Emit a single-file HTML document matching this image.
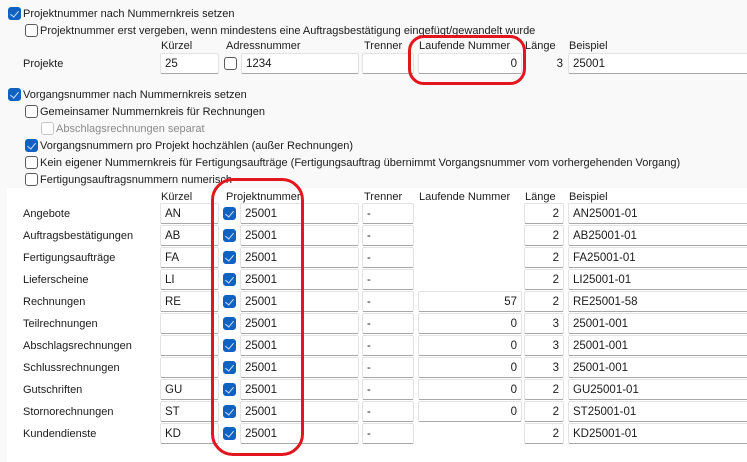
<!DOCTYPE html>
<html><head><meta charset="utf-8"><style>
*{box-sizing:border-box;margin:0;padding:0}
body{width:747px;height:462px;background:#f9f9f9;font-family:"Liberation Sans",sans-serif;font-size:11px;color:#1b1b1b;position:relative;overflow:hidden}
.t{position:absolute;white-space:nowrap;line-height:16px}
.cb{position:absolute;width:13px;height:13px;border:1px solid #5a5a5a;border-radius:3px;background:#fff}
.cb.on{background:#0f62c2;border-color:#0f62c2}
.cb.on::after{content:"";position:absolute;left:3px;top:1px;width:4px;height:7px;border:solid #cfe2fa;border-width:0 1.3px 1.3px 0;transform:rotate(40deg)}
.cb.dis{border-color:#c4c4c4}
.in{position:absolute;height:21px;background:#fff;border:1px solid #e3e3e3;border-bottom-color:#a8a8a8;border-radius:2px;padding:4px 4px 3px;line-height:13px;font-size:11.5px}
.r{text-align:right}
.white{position:absolute;left:7px;top:188px;right:0;bottom:0;background:#fff}
.red{position:absolute;border:3.5px solid #e3151d;border-radius:16px}
</style></head><body>
<div class="cb on" style="left:8px;top:7px"></div><div class="t" style="left:23px;top:6px">Projektnummer nach Nummernkreis setzen</div>
<div class="cb" style="left:25px;top:24px"></div><div class="t" style="left:40px;top:23px">Projektnummer erst vergeben, wenn mindestens eine Auftragsbestätigung eingefügt/gewandelt wurde</div>
<div class="t" style="left:161px;top:38px">Kürzel</div>
<div class="t" style="left:226px;top:38px">Adressnummer</div>
<div class="t" style="left:364px;top:38px">Trenner</div>
<div class="t" style="left:419px;top:38px">Laufende Nummer</div>
<div class="t" style="left:525px;top:38px">Länge</div>
<div class="t" style="left:569px;top:38px">Beispiel</div>
<div class="t" style="left:23px;top:56px">Projekte</div>
<div class="in" style="left:160px;top:53px;width:59px">25</div>
<div class="cb" style="left:224px;top:57px"></div>
<div class="in" style="left:241px;top:53px;width:118px">1234</div>
<div class="in" style="left:362px;top:53px;width:52px"></div>
<div class="in r" style="left:418px;top:53px;width:104px">0</div>
<div class="t r" style="left:525px;top:56px;width:38px;font-size:11.5px">3</div>
<div class="in" style="left:568px;top:53px;width:182px">25001</div>
<div class="red" style="left:408px;top:35px;width:118px;height:50px"></div>

<div class="cb on" style="left:8px;top:88px"></div><div class="t" style="left:23px;top:87px">Vorgangsnummer nach Nummernkreis setzen</div>
<div class="cb" style="left:25px;top:105px"></div><div class="t" style="left:40px;top:104px">Gemeinsamer Nummernkreis für Rechnungen</div>
<div class="cb dis" style="left:41px;top:122px"></div><div class="t" style="left:56px;top:121px;color:#8a8a8a">Abschlagsrechnungen separat</div>
<div class="cb on" style="left:25px;top:139px"></div><div class="t" style="left:40px;top:138px">Vorgangsnummern pro Projekt hochzählen (außer Rechnungen)</div>
<div class="cb" style="left:25px;top:156px"></div><div class="t" style="left:40px;top:155px">Kein eigener Nummernkreis für Fertigungsaufträge (Fertigungsauftrag übernimmt Vorgangsnummer vom vorhergehenden Vorgang)</div>
<div class="cb" style="left:25px;top:173px"></div><div class="t" style="left:40px;top:172px">Fertigungsauftragsnummern numerisch</div>

<div class="white"></div>
<div class="t" style="left:161px;top:189px">Kürzel</div>
<div class="t" style="left:226px;top:189px">Projektnummer</div>
<div class="t" style="left:364px;top:189px">Trenner</div>
<div class="t" style="left:419px;top:189px">Laufende Nummer</div>
<div class="t" style="left:525px;top:189px">Länge</div>
<div class="t" style="left:569px;top:189px">Beispiel</div>

<div class="t" style="left:23px;top:206px">Angebote</div><div class="in" style="left:160px;top:203px;width:59px">AN</div><div class="cb on" style="left:223px;top:207px"></div><div class="in" style="left:240px;top:203px;width:119px">25001</div><div class="in" style="left:362px;top:203px;width:52px">-</div><div class="in r" style="left:524px;top:203px;width:40px">2</div><div class="in" style="left:568px;top:203px;width:182px">AN25001-01</div>
<div class="t" style="left:23px;top:228px">Auftragsbestätigungen</div><div class="in" style="left:160px;top:225px;width:59px">AB</div><div class="cb on" style="left:223px;top:229px"></div><div class="in" style="left:240px;top:225px;width:119px">25001</div><div class="in" style="left:362px;top:225px;width:52px">-</div><div class="in r" style="left:524px;top:225px;width:40px">2</div><div class="in" style="left:568px;top:225px;width:182px">AB25001-01</div>
<div class="t" style="left:23px;top:250px">Fertigungsaufträge</div><div class="in" style="left:160px;top:247px;width:59px">FA</div><div class="cb on" style="left:223px;top:251px"></div><div class="in" style="left:240px;top:247px;width:119px">25001</div><div class="in" style="left:362px;top:247px;width:52px">-</div><div class="in r" style="left:524px;top:247px;width:40px">2</div><div class="in" style="left:568px;top:247px;width:182px">FA25001-01</div>
<div class="t" style="left:23px;top:272px">Lieferscheine</div><div class="in" style="left:160px;top:269px;width:59px">LI</div><div class="cb on" style="left:223px;top:273px"></div><div class="in" style="left:240px;top:269px;width:119px">25001</div><div class="in" style="left:362px;top:269px;width:52px">-</div><div class="in r" style="left:524px;top:269px;width:40px">2</div><div class="in" style="left:568px;top:269px;width:182px">LI25001-01</div>
<div class="t" style="left:23px;top:294px">Rechnungen</div><div class="in" style="left:160px;top:291px;width:59px">RE</div><div class="cb on" style="left:223px;top:295px"></div><div class="in" style="left:240px;top:291px;width:119px">25001</div><div class="in" style="left:362px;top:291px;width:52px">-</div><div class="in r" style="left:418px;top:291px;width:104px">57</div><div class="in r" style="left:524px;top:291px;width:40px">2</div><div class="in" style="left:568px;top:291px;width:182px">RE25001-58</div>
<div class="t" style="left:23px;top:316px">Teilrechnungen</div><div class="in" style="left:160px;top:313px;width:59px"></div><div class="cb on" style="left:223px;top:317px"></div><div class="in" style="left:240px;top:313px;width:119px">25001</div><div class="in" style="left:362px;top:313px;width:52px">-</div><div class="in r" style="left:418px;top:313px;width:104px">0</div><div class="in r" style="left:524px;top:313px;width:40px">3</div><div class="in" style="left:568px;top:313px;width:182px">25001-001</div>
<div class="t" style="left:23px;top:338px">Abschlagsrechnungen</div><div class="in" style="left:160px;top:335px;width:59px"></div><div class="cb on" style="left:223px;top:339px"></div><div class="in" style="left:240px;top:335px;width:119px">25001</div><div class="in" style="left:362px;top:335px;width:52px">-</div><div class="in r" style="left:418px;top:335px;width:104px">0</div><div class="in r" style="left:524px;top:335px;width:40px">3</div><div class="in" style="left:568px;top:335px;width:182px">25001-001</div>
<div class="t" style="left:23px;top:360px">Schlussrechnungen</div><div class="in" style="left:160px;top:357px;width:59px"></div><div class="cb on" style="left:223px;top:361px"></div><div class="in" style="left:240px;top:357px;width:119px">25001</div><div class="in" style="left:362px;top:357px;width:52px">-</div><div class="in r" style="left:418px;top:357px;width:104px">0</div><div class="in r" style="left:524px;top:357px;width:40px">3</div><div class="in" style="left:568px;top:357px;width:182px">25001-001</div>
<div class="t" style="left:23px;top:382px">Gutschriften</div><div class="in" style="left:160px;top:379px;width:59px">GU</div><div class="cb on" style="left:223px;top:383px"></div><div class="in" style="left:240px;top:379px;width:119px">25001</div><div class="in" style="left:362px;top:379px;width:52px">-</div><div class="in r" style="left:418px;top:379px;width:104px">0</div><div class="in r" style="left:524px;top:379px;width:40px">2</div><div class="in" style="left:568px;top:379px;width:182px">GU25001-01</div>
<div class="t" style="left:23px;top:404px">Stornorechnungen</div><div class="in" style="left:160px;top:401px;width:59px">ST</div><div class="cb on" style="left:223px;top:405px"></div><div class="in" style="left:240px;top:401px;width:119px">25001</div><div class="in" style="left:362px;top:401px;width:52px">-</div><div class="in r" style="left:418px;top:401px;width:104px">0</div><div class="in r" style="left:524px;top:401px;width:40px">2</div><div class="in" style="left:568px;top:401px;width:182px">ST25001-01</div>
<div class="t" style="left:23px;top:426px">Kundendienste</div><div class="in" style="left:160px;top:423px;width:59px">KD</div><div class="cb on" style="left:223px;top:427px"></div><div class="in" style="left:240px;top:423px;width:119px">25001</div><div class="in" style="left:362px;top:423px;width:52px">-</div><div class="in r" style="left:524px;top:423px;width:40px">2</div><div class="in" style="left:568px;top:423px;width:182px">KD25001-01</div>

<div class="red" style="left:211px;top:178px;width:93px;height:278px;border-radius:22px"></div>
</body></html>
